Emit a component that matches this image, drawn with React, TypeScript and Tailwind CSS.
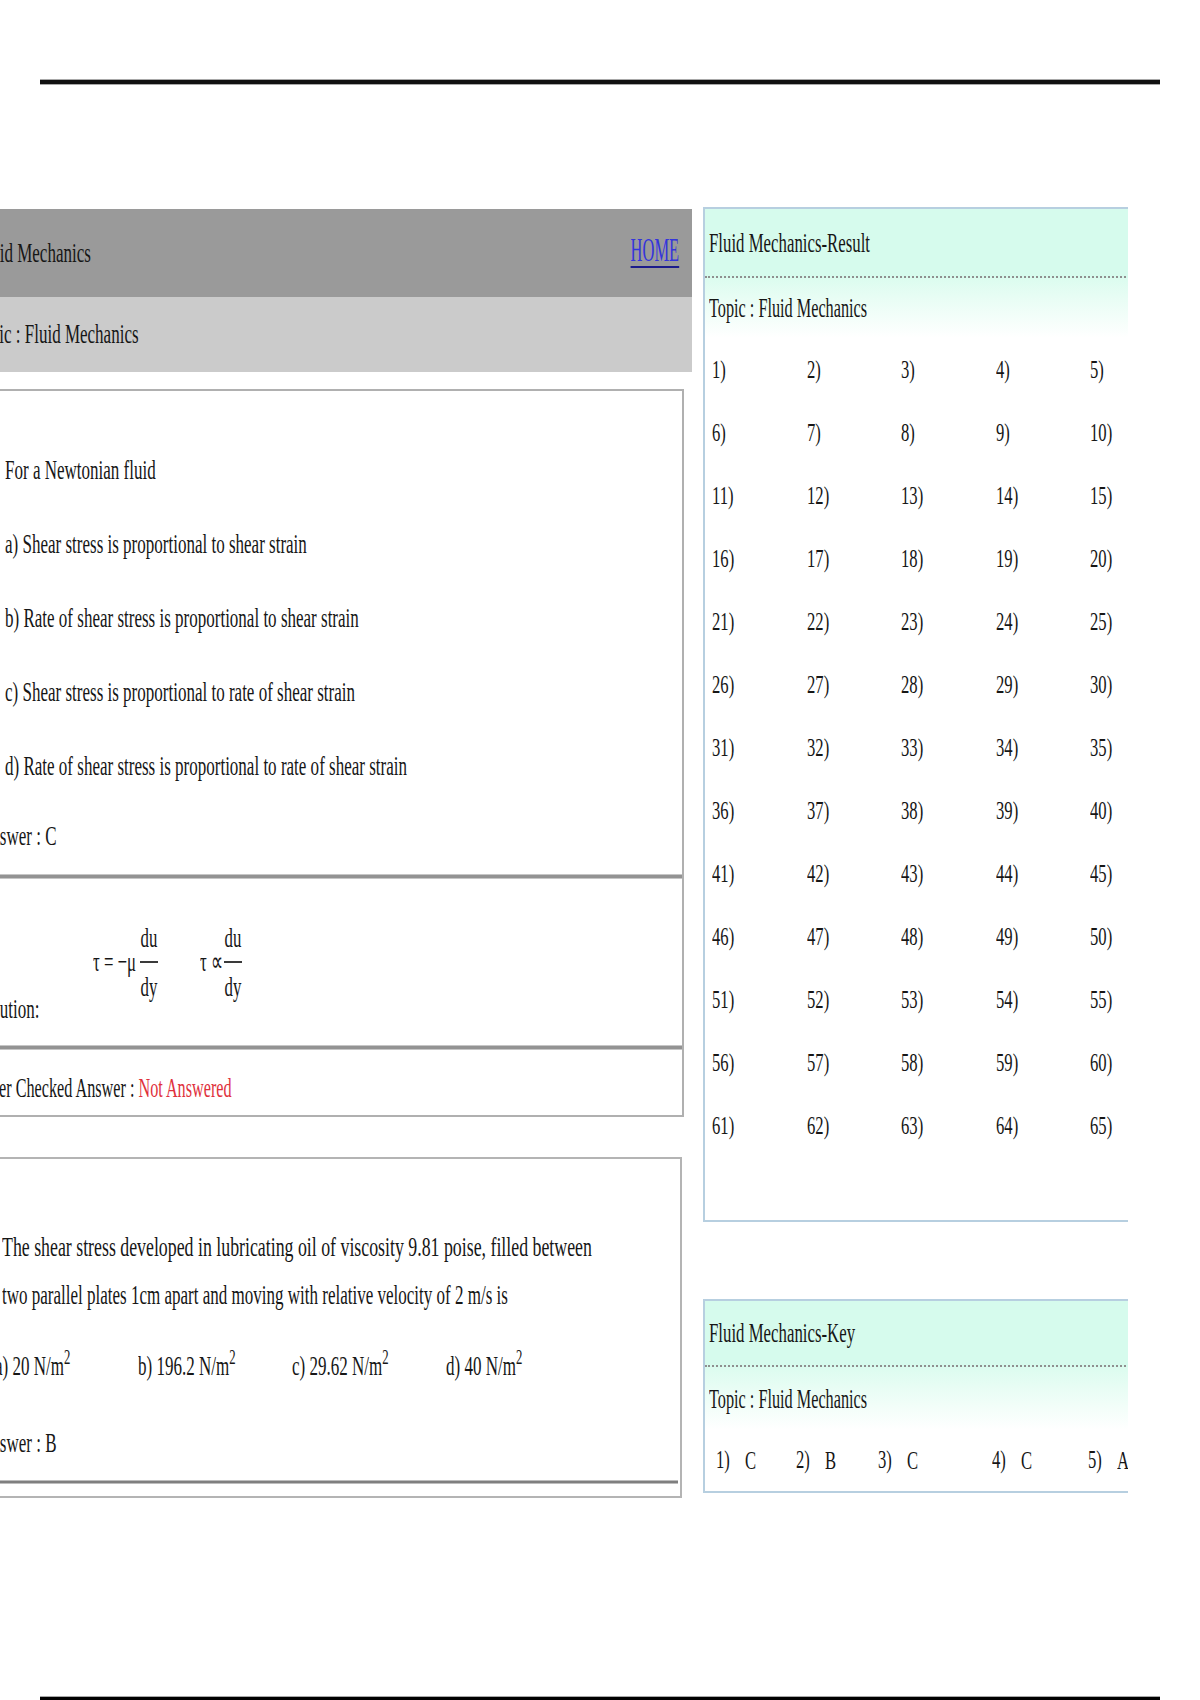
import React from 'react';

// text in the shot is squeezed sideways, so every label is an inline-block scaled on x
const body = 'inline-block whitespace-nowrap leading-none text-[27px] origin-left scale-x-[0.63]';
const wide = 'inline-block whitespace-nowrap leading-none text-[27px] origin-left scale-x-[0.66]';
const tight = 'inline-block whitespace-nowrap leading-none text-[27px] origin-left scale-x-[0.6]';
const head = 'inline-block whitespace-nowrap leading-none text-[28px] origin-left scale-x-[0.6]';
const topic = 'inline-block whitespace-nowrap leading-none text-[28px] origin-left scale-x-[0.58]';
const num = 'inline-block whitespace-nowrap leading-none text-[26px] origin-left scale-x-[0.64]';
const mid = 'inline-block whitespace-nowrap leading-none text-[28px] origin-center scale-x-[0.6]';
const sym = 'inline-block whitespace-nowrap leading-none text-[28px] origin-left scale-x-[0.6]';

const options = [
  'a) Shear stress is proportional to shear strain',
  'b) Rate of shear stress is proportional to shear strain',
  'c) Shear stress is proportional to rate of shear strain',
  'd) Rate of shear stress is proportional to rate of shear strain',
];

const choices = ['a) 20 N/m', 'b) 196.2 N/m', 'c) 29.62 N/m', 'd) 40 N/m'];
const choiceWidths = ['w-[143px]', 'w-[154px]', 'w-[154px]', 'w-[154px]'];

const keyRow = [
  { n: '1)', a: 'C', w: 'w-[80px]' },
  { n: '2)', a: 'B', w: 'w-[82px]' },
  { n: '3)', a: 'C', w: 'w-[114px]' },
  { n: '4)', a: 'C', w: 'w-[96px]' },
  { n: '5)', a: 'A', w: 'w-[96px]' },
];

const Divider = () => <div className="h-[5px] border-y border-[#c6c6c6] bg-[#939393]" />;

const Frac = () => (
  <div className="flex w-[18px] flex-col items-center">
    <div className="flex h-[24px] items-center">
      <span className={mid}>du</span>
    </div>
    <div className="mt-[11px] h-[2px] w-full bg-[#3a3a3a]" />
    <div className="mt-[12px] flex h-[24px] items-center">
      <span className={mid}>dy</span>
    </div>
  </div>
);

const PanelHead = ({ title, tall }: { title: string; tall?: boolean }) => (
  <>
    <div
      className={`flex items-center border-b-2 border-dotted border-[#8f8f8f] bg-[#d6fbed] pl-[4px] ${
        tall ? 'h-[69px]' : 'h-[66px]'
      }`}
    >
      <span className={head}>{title}</span>
    </div>
    <div
      className={`flex items-center bg-linear-to-b from-[#dcfcef] to-white pl-[4px] ${
        tall ? 'h-[60px]' : 'h-[63px]'
      }`}
    >
      <span className={topic}>Topic : Fluid Mechanics</span>
    </div>
  </>
);

export default function App() {
  return (
    <div className="flex h-[1700px] w-[1200px] flex-col overflow-hidden bg-white [font-family:Liberation_Serif,Times_New_Roman,serif] text-[#161616]">
      <div className="mx-[40px] mt-[79px] h-[6px] border-y border-[#a8a8a8] bg-[#111]" />

      <div className="mt-[122px] flex items-start">
        {/* left column, its left edge runs off the page */}
        <div className="ml-[-40px] mt-[2px] w-[732px] shrink-0">
          <div className="flex h-[88px] items-center justify-between bg-[#9a9a9a] pl-[17px] pr-[13px]">
            <span className={body}>Fluid Mechanics</span>
            <a
              href="#"
              className="mb-[6px] inline-block origin-right scale-x-[0.5] whitespace-nowrap text-[33px] leading-none text-[#3434dc] underline decoration-[#1c1c8c] decoration-2 underline-offset-[5px]"
            >
              HOME
            </a>
          </div>
          <div className="flex h-[75px] items-center bg-[#cbcbcb] pl-[13px]">
            <span className={body}>Topic : Fluid Mechanics</span>
          </div>

          <div className="mt-[17px] w-[724px] border-2 border-[#b0b0b0]">
            <div className="h-[483px] pt-[42px]">
              <div className="flex h-[74px] items-center pl-[43px]">
                <span className={body}>For a Newtonian fluid</span>
              </div>
              {options.map((o) => (
                <div key={o} className="flex h-[74px] items-center pl-[43px]">
                  <span className={body}>{o}</span>
                </div>
              ))}
              <div className="flex h-[66px] items-center pl-[17px]">
                <span className={body}>Answer : C</span>
              </div>
            </div>
            <Divider />
            <div className="flex h-[166px] items-end pb-[20px]">
              <div className="w-[131px] shrink-0 pl-[15px]">
                <span className={body}>Solution:</span>
              </div>
              <div className="mb-[26px] flex items-center">
                <div className="w-[47px]">
                  <span className={sym}>τ = −μ</span>
                </div>
                <Frac />
                <div className="ml-[42px] w-[24px]">
                  <span className={sym}>τ ∝</span>
                </div>
                <Frac />
              </div>
            </div>
            <Divider />
            <div className="flex h-[65px] items-center pl-[19px] pt-[11px]">
              <span className={tight}>
                User Checked Answer : <span className="text-[#e0313c]">Not Answered</span>
              </span>
            </div>
          </div>

          <div className="mt-[40px] w-[722px] border-2 border-[#b4b4b4] pt-[64px]">
            <div className="flex h-[48px] items-center pl-[40px]">
              <span className={wide}>
                The shear stress developed in lubricating oil of viscosity 9.81 poise, filled between
              </span>
            </div>
            <div className="flex h-[48px] items-center pl-[40px]">
              <span className={body}>two parallel plates 1cm apart and moving with relative velocity of 2 m/s is</span>
            </div>
            <div className="mt-[24px] flex h-[48px] items-center pl-[33px]">
              {choices.map((c, i) => (
                <div key={c} className={`shrink-0 ${choiceWidths[i]}`}>
                  <span className={body}>
                    {c}
                    <sup>2</sup>
                  </span>
                </div>
              ))}
            </div>
            <div className="mt-[28px] flex h-[48px] items-center pl-[17px]">
              <span className={body}>Answer : B</span>
            </div>
            <div className="mr-[2px] mt-[13px] h-[4px] border-y border-[#bdbdbd] bg-[#7f7f7f]" />
            <div className="h-[12px]" />
          </div>
        </div>

        {/* right column, clipped on its right side */}
        <div className="ml-[11px] w-[425px] shrink-0 overflow-hidden">
          <div className="w-[480px] border-2 border-[#b7cfe0]">
            <PanelHead title="Fluid Mechanics-Result" tall />
            <div className="grid auto-rows-[63px] grid-cols-[repeat(5,94.5px)] pb-[63px] pl-[7px]">
              {Array.from({ length: 65 }, (_, i) => (
                <div key={i} className="flex items-center">
                  <span className={num}>{i + 1})</span>
                </div>
              ))}
            </div>
          </div>

          <div className="mt-[77px] w-[480px] border-2 border-[#b7cfe0]">
            <PanelHead title="Fluid Mechanics-Key" />
            <div className="flex h-[61px] items-center pl-[11px]">
              {keyRow.map((k) => (
                <div key={k.n} className={`flex shrink-0 items-center ${k.w}`}>
                  <div className="w-[29px] shrink-0">
                    <span className={num}>{k.n}</span>
                  </div>
                  <span className={num}>{k.a}</span>
                </div>
              ))}
            </div>
          </div>
        </div>
      </div>

      <div className="mx-[40px] mt-auto h-[4px] border-t border-[#a8a8a8] bg-black" />
    </div>
  );
}
